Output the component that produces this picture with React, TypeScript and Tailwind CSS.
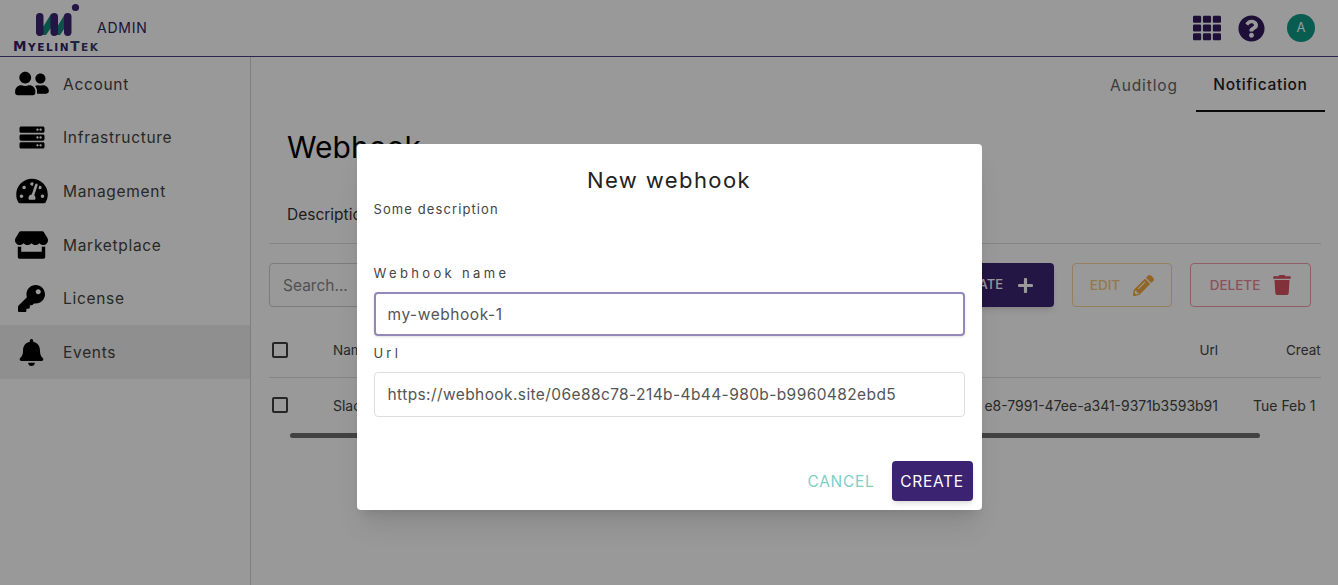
import React from "react";
import { FaUserFriends, FaServer, FaTachometerAlt, FaStore, FaKey, FaBell, FaQuestionCircle, FaPlus, FaPencilAlt, FaTrash, FaTh } from "react-icons/fa";

const font = { fontFamily: "Inter, 'Liberation Sans', sans-serif" };

const nav = [
  { label: "Account", icon: <FaUserFriends className="w-[34px] h-[27px]" /> },
  { label: "Infrastructure", icon: <FaServer className="w-[28px] h-[25px]" /> },
  { label: "Management", icon: <FaTachometerAlt className="w-[32px] h-[28px]" /> },
  { label: "Marketplace", icon: <FaStore className="w-[33px] h-[28px]" /> },
  { label: "License", icon: <FaKey className="w-[27px] h-[27px]" /> },
  { label: "Events", icon: <FaBell className="w-[25px] h-[27px]" />, active: true },
];

function Logo() {
  return (
    <div className="relative w-[90px] h-[56px] shrink-0">
      <svg className="absolute left-[30px] top-[2px]" width="52" height="34" viewBox="0 0 52 34">
        <circle cx="45.5" cy="5.5" r="3.6" fill="#3b2372" />
        <path d="M10 30 L21 12 L25 12 L25 20 L16 33 L10 33 Z" fill="#0f8a7c" />
        <path d="M24 30 L35 12 L39 12 L39 20 L30 33 L24 33 Z" fill="#0f8a7c" />
        <rect x="6" y="11" width="7.5" height="23" rx="3.7" fill="#3b2372" />
        <rect x="20.5" y="11" width="7.5" height="23" rx="3.7" fill="#3b2372" />
        <rect x="34" y="11" width="7.5" height="23" rx="3.7" fill="#3b2372" />
      </svg>
      <span className="absolute left-[13px] top-[39px] text-[13.5px] leading-[14px] font-extrabold tracking-[1.6px] text-[#32225f] whitespace-nowrap" style={{ fontFamily: "'DejaVu Sans', sans-serif" }}>
        M<span className="text-[10.5px]">YELIN</span><span className="text-[#3c3a68]">T<span className="text-[10.5px]">EK</span></span>
      </span>
    </div>
  );
}

function Checkbox() {
  return <span className="block w-[16px] h-[16px] rounded-[2px] border-2 border-[#3f3f3f]" />;
}

export default function App() {
  return (
    <div className="relative h-[585px] w-[1338px] overflow-hidden bg-white text-[#333]" style={font}>
      <header className="h-[57px] border-b border-[#4a3f80] flex items-center pr-[23px]">
        <Logo />
        <span className="ml-[7px] text-[14px] tracking-[0.8px] text-[#32225f] mt-[-2px]">ADMIN</span>
        <div className="ml-auto flex items-center">
          <FaTh className="w-[28px] h-[28px] text-[#32195f]" />
          <FaQuestionCircle className="ml-[17px] w-[27px] h-[27px] text-[#32195f]" />
          <span className="ml-[22px] w-[28px] h-[28px] rounded-full bg-[#0f9a85] text-white text-[13px] flex items-center justify-center">A</span>
        </div>
      </header>

      <div className="flex h-[528px]">
        <aside className="w-[251px] shrink-0 border-r border-[#d4d4d4]">
          {nav.map((n) => (
            <div key={n.label} className={`h-[53.7px] flex items-center ${n.active ? "bg-[#eeeeee]" : ""}`}>
              <span className="w-[63px] flex justify-center text-black">{n.icon}</span>
              <span className="text-[15.5px] tracking-[0.7px] text-[#444] pt-[1px]">{n.label}</span>
            </div>
          ))}
        </aside>

        <main className="flex-1 min-w-0 overflow-hidden">
          <div className="flex justify-end pr-[13px] h-[55px]">
            <div className="h-full w-[104px] pt-[2px] flex items-center justify-center text-[15.5px] tracking-[0.9px] text-[#666]">Auditlog</div>
            <div className="h-full w-[129px] pt-[2px] flex items-center justify-center text-[15.5px] tracking-[0.7px] font-medium text-[#222] border-b-2 border-[#111]">Notification</div>
          </div>

          <div className="pl-[18px] pr-[17px]">
            <h1 className="pl-[18px] pt-[17px] text-[30px] leading-[36px] font-normal text-black">Webhook</h1>
            <div className="mt-[38px] pl-[18px] pb-[16px] border-b border-[#dcdcdc] text-[15.5px] leading-[24px] text-[#333]">Description</div>

            <div className="mt-[19px] flex items-center">
              <div className="w-[320px] h-[44px] pt-[1px] rounded-[4px] border border-[#cfcfcf] flex items-center pl-[13px] text-[15.5px] text-[#888]">Search...</div>
              <div className="ml-auto w-[163px] h-[44px] rounded-[4px] bg-[#3b2372] text-white text-[13px] font-medium flex items-center justify-end gap-[14px] pr-[20px] shadow-md">CREATE <FaPlus className="w-[17px] h-[17px]" /></div>
              <div className="ml-[18px] w-[100px] h-[44px] rounded-[4px] border border-[#f9d59b] text-[13.5px] font-medium flex items-center justify-center gap-[13px] text-[#f0a93e]"><span className="text-[#f7c883]">EDIT</span> <FaPencilAlt className="w-[21px] h-[21px]" /></div>
              <div className="ml-[18px] mr-[10px] w-[121px] h-[44px] rounded-[4px] border border-[#ee9fab] text-[13.5px] font-medium flex items-center justify-center gap-[13px] text-[#d9505f]"><span className="text-[#e68a96]">DELETE</span> <FaTrash className="w-[18px] h-[20px]" /></div>
            </div>

            <div className="mt-[19px] h-[52px] pb-[3px] flex items-center border-b border-[#dcdcdc] text-[13.5px] text-[#444]">
              <span className="ml-[3px] mr-[45px]"><Checkbox /></span>
              <span>Name</span>
              <span className="ml-auto mr-[68px]">Url</span>
              <span className="w-[35px] whitespace-nowrap">Creat</span>
            </div>
            <div className="h-[54px] flex items-center text-[14px] text-[#444]">
              <span className="ml-[3px] mr-[45px]"><Checkbox /></span>
              <span>Slack</span>
              <span className="ml-auto whitespace-nowrap">e8-7991-47ee-a341-9371b3593b91</span>
              <span className="ml-[35px] w-[68px] whitespace-nowrap">Tue Feb 1</span>
            </div>
            <div className="mt-[1px] ml-[21px] w-[970px] h-[5px] rounded-full bg-[#6e6e6e]" />
          </div>
        </main>
      </div>

      <div className="absolute inset-0 bg-black/40 flex items-start justify-center pt-[144px]">
        <div className="w-[625px] h-[366px] bg-white rounded-[4px] shadow-xl px-[17px] flex flex-col">
          <h2 className="mt-[21px] text-center text-[22px] leading-[30px] font-normal tracking-[1.4px] text-[#222]">New webhook</h2>
          <p className="mt-[5px] text-[13px] leading-[18px] tracking-[1.1px] text-[#444]">Some description</p>
          <label className="mt-[46px] text-[13px] leading-[18px] tracking-[3.35px] text-[#444]">Webhook name</label>
          <div className="mt-[10px] h-[44px] pt-[1px] rounded-[4px] border-2 border-[#9488b8] flex items-center pl-[12px] text-[15.5px] tracking-[0.55px] text-[#555] shadow-sm">my-webhook-1</div>
          <label className="mt-[8px] text-[13px] leading-[18px] tracking-[3.2px] text-[#444]">Url</label>
          <div className="mt-[10px] h-[45px] rounded-[4px] border border-[#dedede] flex items-center pl-[13px] text-[15.5px] tracking-[0.4px] text-[#555]">https://webhook.site/06e88c78-214b-4b44-980b-b9960482ebd5</div>
          <div className="mt-[44px] -mr-[8px] flex items-center justify-end">
            <span className="pt-[1px] text-[15.5px] tracking-[0.7px] text-[#7fcfc4]">CANCEL</span>
            <span className="ml-[17px] w-[81px] h-[40px] pt-[1px] rounded-[4px] bg-[#3b2372] text-white text-[15.5px] tracking-[0.7px] flex items-center justify-center shadow-md">CREATE</span>
          </div>
        </div>
      </div>
    </div>
  );
}
